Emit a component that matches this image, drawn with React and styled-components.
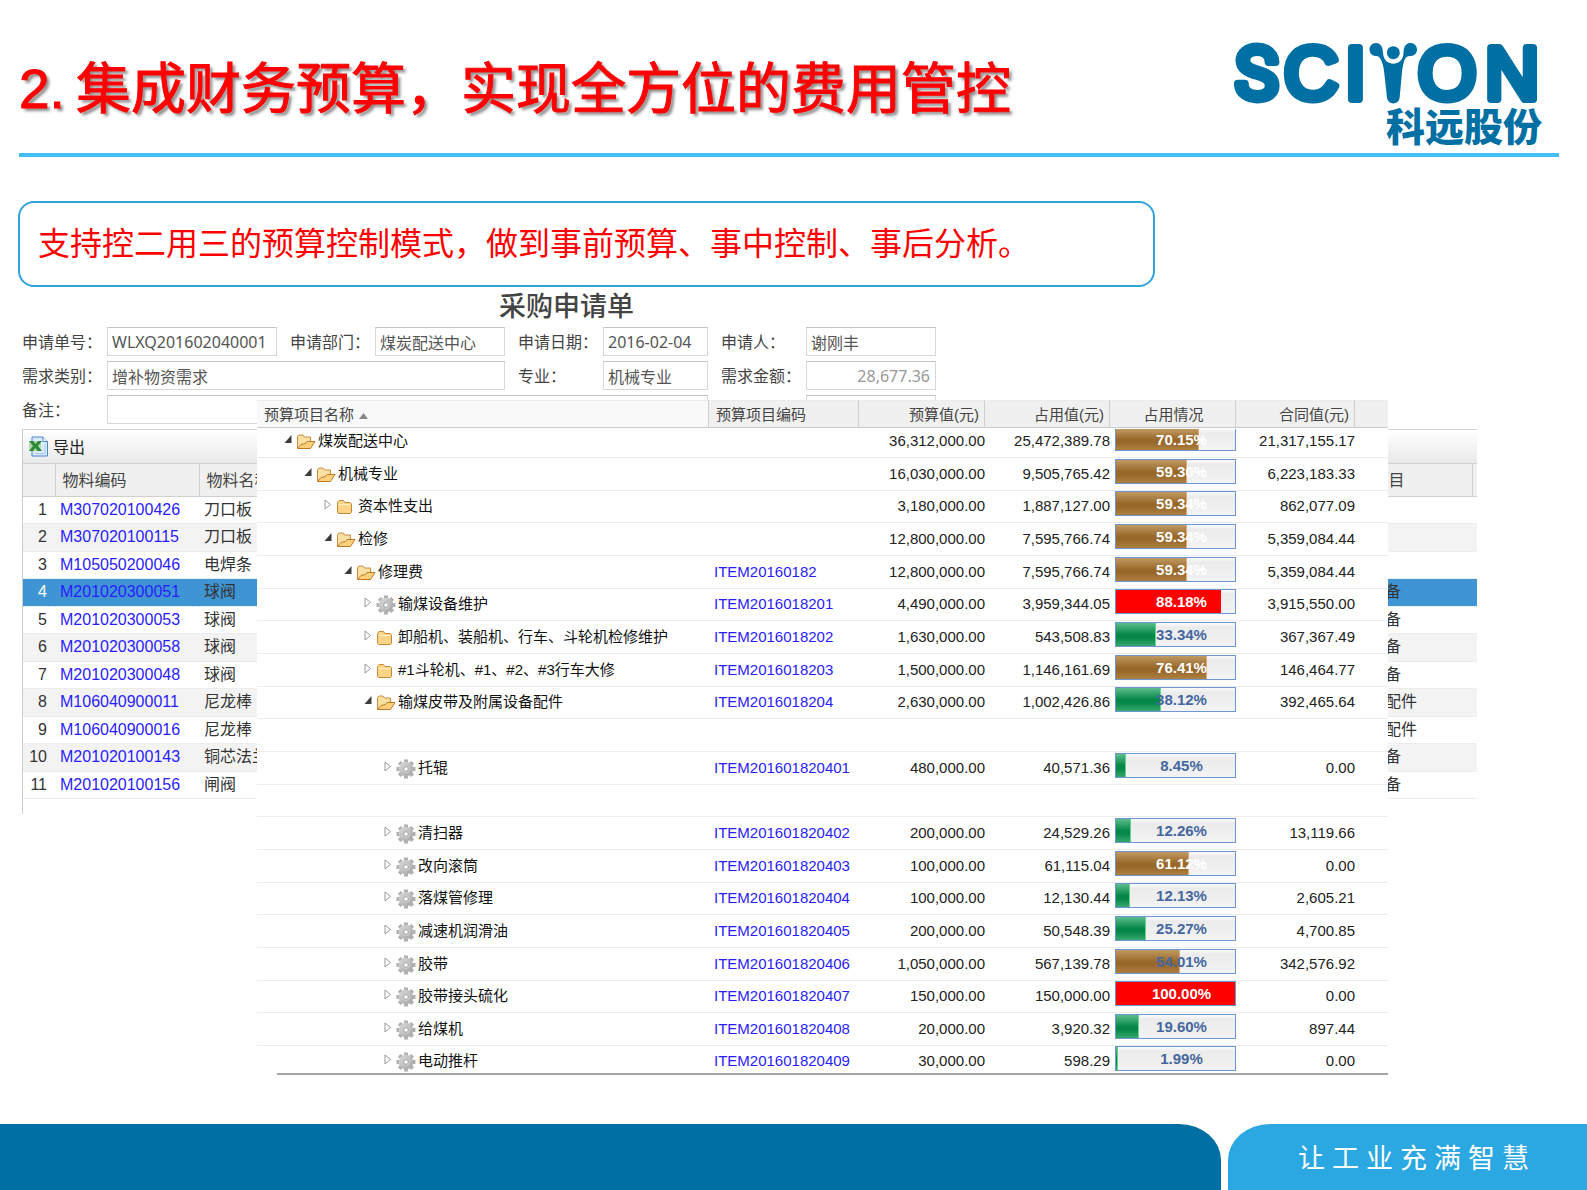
import React from "react";
import styled, { createGlobalStyle, css } from "styled-components";

const SANS = '"Liberation Sans", "Noto Sans CJK SC", sans-serif';
const FIELD = '"Noto Sans", "Noto Sans CJK SC", sans-serif';
const NAVY = "#006fa3";
const LINK = "#2a1cff";

const GlobalStyle = createGlobalStyle`
  *, *::before, *::after { box-sizing: border-box; }
  body { margin: 0; background: #fff; font-family: ${SANS}; color: #333; }
  h1, h2, p { margin: 0; font-weight: inherit; }
  a { color: ${LINK}; text-decoration: none; }
`;

const Slide = styled.div`
  display: flex;
  flex-direction: column;
  min-height: 100vh;
`;

/* ---------- header ---------- */
const Header = styled.header`
  display: flex;
  justify-content: space-between;
  height: 157px;
  margin: 0 28px 0 19px;
  border-bottom: 4px solid #45bdf5;
`;

const Title = styled.h1`
  display: flex;
  align-items: center;
  height: 178px;
  font-size: 55px;
  line-height: 64px;
  font-weight: 400;
  color: #f00;
  white-space: nowrap;
  -webkit-text-stroke: 1px #f00;
  text-shadow: 3px 3px 3px rgba(0, 0, 0, 0.45);
`;

const TitleNumber = styled.span`
  width: 57px;
`;

const Brand = styled.div`
  display: flex;
  flex-direction: column;
  align-items: flex-end;
  padding: 28px 17px 0 0;
  color: ${NAVY};
`;

const BrandMark = styled.svg`
  display: block;
  width: 310px;
  height: 88px;
  margin-bottom: -10px;
  overflow: visible;
  font-family: "Liberation Sans", sans-serif;
  font-size: 75px;
  fill: ${NAVY};

  text {
    stroke: ${NAVY};
    stroke-width: 8px;
    stroke-linejoin: round;
  }
`;

const NarrowLetter = styled.text`
  font-family: Roboto, sans-serif;
  font-size: 73px;
`;

const BrandName = styled.span`
  font-size: 39px;
  line-height: 44px;
  font-weight: 900;
`;

/* ---------- body ---------- */
const Main = styled.main`
  flex: 1;
  padding: 44px 110px 49px 18px;
`;

const Callout = styled.p`
  width: calc(100% - 322px);
  height: 86px;
  padding: 0 18px;
  border: 2px solid #2ea4dc;
  border-radius: 16px;
  font-size: 32px;
  line-height: 82px;
  color: #f00;
  white-space: nowrap;
`;

const Request = styled.section`
  position: relative;
  min-height: 788px;
  padding-left: 4px;
`;

const FormTitle = styled.h2`
  padding-left: 477px;
  font-size: 27px;
  line-height: 40px;
  font-weight: 500;
  color: #444;
`;

const Form = styled.form`
  display: grid;
  grid-template-columns: 85px 170px 98px 130px 98px 105px 98px 130px;
  grid-auto-rows: 29px;
  row-gap: 5px;
  padding-bottom: 5px;
`;

const Label = styled.label`
  padding-left: ${(p) => (p.$first ? 0 : 13)}px;
  font-size: 16px;
  line-height: 32px;
  color: #444;
  white-space: nowrap;
`;

const Field = styled.input`
  grid-column: span ${(p) => p.$span || 1};
  min-width: 0;
  width: 100%;
  height: 29px;
  padding: 0 5px 0 4px;
  border: 1px solid #d8d8d8;
  border-top-color: #c4c4c4;
  background: #fff;
  font-family: ${FIELD};
  font-size: 16px;
  color: ${(p) => (p.$muted ? "#999" : "#555")};
  text-align: ${(p) => (p.$muted ? "right" : "left")};
  outline: none;
`;

const Spacer = styled.span``;

/* ---------- material grid ---------- */
const MaterialPanel = styled.div`
  padding-bottom: 15px;
  border-left: 1px solid #ccc;
`;

const Toolbar = styled.div`
  height: 35px;
  padding: 2px 6px;
  border-top: 1px solid #d4d4d4;
  border-bottom: 1px solid #d0d0d0;
  background: linear-gradient(#fff, #e9e9e9);
`;

const ToolButton = styled.button`
  display: flex;
  align-items: center;
  gap: 4px;
  height: 28px;
  padding: 0;
  border: 0;
  background: none;
  font-family: ${SANS};
  font-size: 16px;
  color: #222;
`;

const MaterialTable = styled.table`
  width: 100%;
  table-layout: fixed;
  border-collapse: collapse;
  font-size: 16px;
  white-space: nowrap;

  th {
    height: 32px;
    padding: 3px 0 0 7px;
    border-right: 1px solid #d0d0d0;
    border-bottom: 1px solid #d0d0d0;
    background: #f0f0f0;
    font-weight: 400;
    text-align: left;
    color: #444;
    line-height: 20px;
  }
  th:nth-child(4) { padding-left: 5px; }
  th:last-child { border-right: 0; }

  td {
    padding: 0 0 0 5px;
    line-height: 20px;
    overflow: hidden;
  }
  td:first-child { padding: 0 8px 0 0; text-align: right; }
  td:nth-child(4) { padding-left: 18px; }
`;

const MaterialRow = styled.tr`
  height: 27px;
  border-bottom: 1px solid #ededed;
  &:nth-child(even) { height: 28px; background: #f3f3f3; }
  ${(p) =>
    p.$selected &&
    css`
      &&:nth-child(even) {
        background: #3f95d3;
        border-bottom: 1px dotted #cfe6f7;
      }
      td:first-child { color: #fff; }
    `}
`;

/* ---------- budget window ---------- */
const BudgetWindow = styled.div`
  position: absolute;
  top: 113px;
  left: 239px;
  right: 89px;
  background: #fff;
`;

const BudgetTable = styled.table`
  width: 100%;
  table-layout: fixed;
  border-collapse: separate;
  border-spacing: 0;
  font-size: 15px;
  white-space: nowrap;
`;

const HeadCell = styled.th`
  height: 28px;
  padding: 2px 5px 0 7px;
  border-right: 1px solid #cfcfcf;
  border-bottom: 1px solid #cacaca;
  border-top: 1px solid #ececec;
  background: ${(p) => (p.$sorted ? "#f9f9f9" : "#f0f0f0")};
  font-weight: 400;
  line-height: 20px;
  color: #444;
  text-align: ${(p) => p.$align || "left"};
  &:last-child { border-right: 0; }
`;

const BudgetRow = styled.tr`
  height: 33px;
  &:nth-child(3n) { height: 32px; }
  &:first-child { height: 30px; }
  &:last-child { height: 27px; }
`;

const Cell = styled.td`
  padding: 0 0 7px;
  border-bottom: 1px solid #ececec;
  vertical-align: bottom;
  line-height: 18px;
  color: #222;
  text-align: ${(p) => p.$align || "left"};
  a { padding-left: 5px; }
  tr:last-child & { padding-bottom: 3px; border-bottom: 0; }
`;

const MeterCell = styled(Cell)`
  padding: 0 0 6px 5px;
  tr:last-child & { padding-bottom: 2px; }
`;

const TreeNode = styled.span`
  display: flex;
  height: 18px;
  padding-left: ${(p) => 27 + p.$level * 20}px;
  color: #111;
`;

const ArrowSlot = styled.span`
  flex: none;
  width: 12px;
  padding-top: 2px;
  line-height: 0;
`;

const IconSlot = styled.span`
  flex: none;
  width: 22px;
  line-height: 0;
`;

const SortArrow = styled.svg`
  margin-left: 5px;
  fill: #888;
`;

const Meter = styled.div`
  position: relative;
  height: ${(p) => (p.$clipped ? 22 : 25)}px;
  border: 1px solid #6d97d3;
  border-top-width: ${(p) => (p.$clipped ? 0 : 1)}px;
  background: linear-gradient(#fafafa, #ebebeb 20%, #f3f3f3);
`;

const fills = {
  brown: "linear-gradient(#c09a62, #98682a 50%, #98682a 65%, #ad8040)",
  green: "linear-gradient(#5cbd8c, #068749 50%, #068749 65%, #37a86e)",
  red: "#f00",
};

const MeterFill = styled.div`
  height: 100%;
  border-right: 1px solid ${(p) => ({ brown: "#e0a878", green: "#5fd885", red: "#f00" })[p.$tone]};
  background: ${(p) => fills[p.$tone]};
`;

const MeterText = styled.span`
  position: absolute;
  inset: 0;
  display: flex;
  align-items: center;
  justify-content: center;
  padding-left: 12px;
  font-weight: 700;
  color: ${(p) => (p.$light ? "#fff" : "#45679f")};
`;

const WindowEdge = styled.div`
  height: 2px;
  margin-left: 20px;
  border-bottom: 2px solid #a5a5a5;
`;

/* ---------- footer ---------- */
const Footer = styled.footer`
  display: flex;
  gap: 7px;
  height: 66px;
`;

const FooterBar = styled.div`
  flex: 1;
  background: ${NAVY};
  border-top-right-radius: 42px 36px;
`;

const Slogan = styled.div`
  width: 359px;
  padding-left: 70px;
  background: #2ba7e2;
  border-top-left-radius: 42px 36px;
  font-family: ${FIELD};
  font-size: 27px;
  line-height: 68px;
  color: #fff;
  white-space: nowrap;
`;

/* ---------- drawings ---------- */
const Logo = () => (
  <BrandMark viewBox="0 -12 310 88" role="img" aria-label="SCIYON">
    <NarrowLetter x="3" y="59">S</NarrowLetter>
    <text x="52" y="59">C</text>
    <text x="113" y="59">I</text>
    <circle cx="161.3" cy="12.7" r="6.500" />
    <path d="M150.300 8.300C149.500 5 147 3 144 3C140 3 137.500 6 137.500 9.500C137.500 14 141 16 144 16C147 16 148.300 18 149.500 21C151.500 26 152 30 152.500 35L155 58C155.600 61.500 158 63.400 161.300 63.400C164.600 63.400 167 61.500 167.600 58L170 32C170.500 27 171.500 23 172.500 20C173.500 17.500 175 16 178.500 16C182 16 185 13.500 185 9.500C185 6 182.500 3 178.700 3C175 3 173 5 172 8.300C171.500 10 171.800 12.500 171.300 15C170.300 20.500 166 23.700 161.300 23.700C156.600 23.700 152.300 20.500 151.300 15C150.800 12.500 150.900 10 150.300 8.300Z" />
    <text x="186" y="59">O</text>
    <text x="253" y="59">N</text>
  </BrandMark>
);

const ExcelIcon = () => (
  <svg width="20" height="21" viewBox="0 0 20 21" aria-hidden="true">
    <path d="M3 1H14L18.500 5.500V20H3Z" fill="#dcebfb" stroke="#4a84cf" />
    <path d="M14 1V5.500H18.500" fill="#fff" stroke="#4a84cf" />
    <path d="M6 17.500H16V8" fill="none" stroke="#a9c9ee" />
    <rect x="0" y="5" width="12" height="10" fill="#b5dab5" />
    <path d="M0 5H4.500L6.500 8L9 5H13L9 10L13 15H8.500L6.300 12L4 15H0L4 10Z" fill="#2f8b3a" />
  </svg>
);

const FolderOpen = () => (
  <svg width="20" height="18" viewBox="0 0 20 18" aria-hidden="true">
    <path d="M1.500 16V4.500L3 3H7L8.500 5H14.500V9" fill="#fbe0a4" stroke="#c98b3c" />
    <path d="M1.500 16.500L5 12.500L9.500 11.500L11 9.500H19L14.500 16.500Z" fill="#fdd17c" stroke="#c07a28" />
  </svg>
);

const FolderClosed = () => (
  <svg width="20" height="18" viewBox="0 0 20 18" aria-hidden="true">
    <path d="M1.500 15V5.500L3 3.500H7.500L9 5.500H14L15.500 7V15L14.500 16.500H2.500Z" fill="#fdd488" stroke="#c88936" />
    <path d="M2.500 7.500H14.500" stroke="#fff0c8" />
  </svg>
);

const Gear = () => (
  <svg width="20" height="20" viewBox="0 0 20 20" aria-hidden="true">
    <defs>
      <linearGradient id="steel" x1="0" y1="0" x2="1" y2="1">
        <stop offset="0" stopColor="#dcdcdc" />
        <stop offset="1" stopColor="#a2a2a2" />
      </linearGradient>
    </defs>
    <g stroke="#b0b0b0" strokeWidth="4">
      <path d="M10 0.500V19.500M0.500 10H19.500M3.300 3.300L16.700 16.700M16.700 3.300L3.300 16.700" />
    </g>
    <circle cx="10" cy="10" r="7.300" fill="url(#steel)" />
    <circle cx="10" cy="10" r="4" fill="#c9c9c9" />
    <circle cx="10" cy="10" r="2.300" fill="#fff" stroke="#a5a5a5" />
  </svg>
);

const Arrow = ({ open }) => (
  <svg width="9" height="12" viewBox="0 0 9 12" aria-hidden="true">
    {open ? (
      <path d="M7.500 1V9H0.500Z" fill="#3c3c3c" />
    ) : (
      <path d="M1 1V10L6.500 5.500Z" fill="#fff" stroke="#999" />
    )}
  </svg>
);

const icons = { open: FolderOpen, closed: FolderClosed, gear: Gear };

/* ---------- data ---------- */
const materials = [
  ["M307020100426", "刀口板", ""],
  ["M307020100115", "刀口板", ""],
  ["M105050200046", "电焊条", ""],
  ["M201020300051", "球阀", "备"],
  ["M201020300053", "球阀", "备"],
  ["M201020300058", "球阀", "备"],
  ["M201020300048", "球阀", "备"],
  ["M106040900011", "尼龙棒", "配件"],
  ["M106040900016", "尼龙棒", "配件"],
  ["M201020100143", "铜芯法兰", "备"],
  ["M201020100156", "闸阀", "备"],
];

const budget = [
  [0, "open", "煤炭配送中心", "", "36,312,000.00", "25,472,389.78", 70.15, "21,317,155.17"],
  [1, "open", "机械专业", "", "16,030,000.00", "9,505,765.42", 59.3, "6,223,183.33"],
  [2, "closed", "资本性支出", "", "3,180,000.00", "1,887,127.00", 59.34, "862,077.09"],
  [2, "open", "检修", "", "12,800,000.00", "7,595,766.74", 59.34, "5,359,084.44"],
  [3, "open", "修理费", "ITEM20160182", "12,800,000.00", "7,595,766.74", 59.34, "5,359,084.44"],
  [4, "gear", "输煤设备维护", "ITEM2016018201", "4,490,000.00", "3,959,344.05", 88.18, "3,915,550.00"],
  [4, "closed", "卸船机、装船机、行车、斗轮机检修维护", "ITEM2016018202", "1,630,000.00", "543,508.83", 33.34, "367,367.49"],
  [4, "closed", "#1斗轮机、#1、#2、#3行车大修", "ITEM2016018203", "1,500,000.00", "1,146,161.69", 76.41, "146,464.77"],
  [4, "open", "输煤皮带及附属设备配件", "ITEM2016018204", "2,630,000.00", "1,002,426.86", 38.12, "392,465.64"],
  null,
  [5, "gear", "托辊", "ITEM201601820401", "480,000.00", "40,571.36", 8.45, "0.00"],
  null,
  [5, "gear", "清扫器", "ITEM201601820402", "200,000.00", "24,529.26", 12.26, "13,119.66"],
  [5, "gear", "改向滚筒", "ITEM201601820403", "100,000.00", "61,115.04", 61.12, "0.00"],
  [5, "gear", "落煤管修理", "ITEM201601820404", "100,000.00", "12,130.44", 12.13, "2,605.21"],
  [5, "gear", "减速机润滑油", "ITEM201601820405", "200,000.00", "50,548.39", 25.27, "4,700.85"],
  [5, "gear", "胶带", "ITEM201601820406", "1,050,000.00", "567,139.78", 54.01, "342,576.92"],
  [5, "gear", "胶带接头硫化", "ITEM201601820407", "150,000.00", "150,000.00", 100, "0.00"],
  [5, "gear", "给煤机", "ITEM201601820408", "20,000.00", "3,920.32", 19.6, "897.44"],
  [5, "gear", "电动推杆", "ITEM201601820409", "30,000.00", "598.29", 1.99, "0.00"],
];

const toneOf = (v) => (v > 80 ? "red" : v > 50 ? "brown" : "green");

const UsageMeter = ({ value, clipped }) => (
  <Meter $clipped={clipped}>
    <MeterFill $tone={toneOf(value)} style={{ width: `${value}%` }} />
    <MeterText $light={value > 55}>{value.toFixed(2)}%</MeterText>
  </Meter>
);

const BudgetItem = ({ item, clipped }) => {
  if (!item) {
    return (
      <BudgetRow>
        <Cell colSpan={7} />
      </BudgetRow>
    );
  }
  const [level, kind, name, code, plan, used, rate, contract] = item;
  const Icon = icons[kind];
  return (
    <BudgetRow>
      <Cell>
        <TreeNode $level={level}>
          <ArrowSlot><Arrow open={kind === "open"} /></ArrowSlot>
          <IconSlot><Icon /></IconSlot>
          {name}
        </TreeNode>
      </Cell>
      <Cell>{code && <a href={`#${code}`}>{code}</a>}</Cell>
      <Cell $align="right">{plan}</Cell>
      <Cell $align="right">{used}</Cell>
      <MeterCell><UsageMeter value={rate} clipped={clipped} /></MeterCell>
      <Cell $align="right">{contract}</Cell>
      <Cell />
    </BudgetRow>
  );
};

export default function App() {
  return (
    <Slide>
      <GlobalStyle />
      <Header>
        <Title>
          <TitleNumber>2.</TitleNumber>集成财务预算，实现全方位的费用管控
        </Title>
        <Brand>
          <Logo />
          <BrandName>科远股份</BrandName>
        </Brand>
      </Header>

      <Main>
        <Callout>支持控二用三的预算控制模式，做到事前预算、事中控制、事后分析。</Callout>

        <Request>
          <FormTitle>采购申请单</FormTitle>
          <Form>
            <Label $first htmlFor="no">申请单号：</Label>
            <Field id="no" defaultValue="WLXQ201602040001" />
            <Label htmlFor="dept">申请部门：</Label>
            <Field id="dept" defaultValue="煤炭配送中心" />
            <Label htmlFor="date">申请日期：</Label>
            <Field id="date" defaultValue="2016-02-04" />
            <Label htmlFor="person">申请人：</Label>
            <Field id="person" defaultValue="谢刚丰" />

            <Label $first htmlFor="type">需求类别：</Label>
            <Field id="type" $span={3} defaultValue="增补物资需求" />
            <Label htmlFor="major">专业：</Label>
            <Field id="major" defaultValue="机械专业" />
            <Label htmlFor="amount">需求金额：</Label>
            <Field id="amount" $muted defaultValue="28,677.36" />

            <Label $first id="note-label" htmlFor="note">备注：</Label>
            <Field id="note" $span={5} />
            <Spacer />
            <Field aria-labelledby="note-label" />
          </Form>

          <MaterialPanel>
            <Toolbar>
              <ToolButton type="button"><ExcelIcon />导出</ToolButton>
            </Toolbar>
            <MaterialTable>
              <colgroup>
                <col style={{ width: 32 }} />
                <col style={{ width: 144 }} />
                <col />
                <col style={{ width: 105 }} />
                <col style={{ width: 5 }} />
              </colgroup>
              <thead>
                <tr>
                  <th />
                  <th>物料编码</th>
                  <th>物料名称</th>
                  <th>项目</th>
                  <th />
                </tr>
              </thead>
              <tbody>
                {materials.map(([code, name, item], i) => (
                  <MaterialRow key={code} $selected={i === 3}>
                    <td>{i + 1}</td>
                    <td><a href={`#${code}`}>{code}</a></td>
                    <td>{name}</td>
                    <td>{item}</td>
                    <td />
                  </MaterialRow>
                ))}
              </tbody>
            </MaterialTable>
          </MaterialPanel>

          <BudgetWindow>
            <BudgetTable>
              <colgroup>
                <col />
                <col style={{ width: 150 }} />
                <col style={{ width: 126 }} />
                <col style={{ width: 125 }} />
                <col style={{ width: 126 }} />
                <col style={{ width: 119 }} />
                <col style={{ width: 33 }} />
              </colgroup>
              <thead>
                <tr>
                  <HeadCell $sorted>
                    预算项目名称
                    <SortArrow width="9" height="7" viewBox="0 0 9 7" aria-hidden="true">
                      <path d="M4.500 0L9 6H0Z" />
                    </SortArrow>
                  </HeadCell>
                  <HeadCell>预算项目编码</HeadCell>
                  <HeadCell $align="right">预算值(元)</HeadCell>
                  <HeadCell $align="right">占用值(元)</HeadCell>
                  <HeadCell $align="center">占用情况</HeadCell>
                  <HeadCell $align="right">合同值(元)</HeadCell>
                  <HeadCell />
                </tr>
              </thead>
              <tbody>
                {budget.map((item, i) => (
                  <BudgetItem key={i} item={item} clipped={i === 0} />
                ))}
              </tbody>
            </BudgetTable>
            <WindowEdge />
          </BudgetWindow>
        </Request>
      </Main>

      <Footer>
        <FooterBar />
        <Slogan>让 工 业 充 满 智 慧</Slogan>
      </Footer>
    </Slide>
  );
}
